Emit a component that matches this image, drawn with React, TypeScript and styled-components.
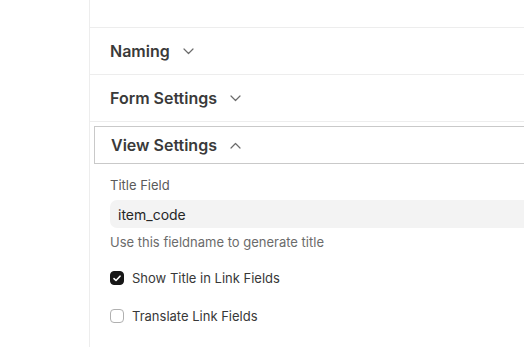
import React from "react";
import styled, { createGlobalStyle } from "styled-components";

const Global = createGlobalStyle`
  html, body { margin: 0; padding: 0; background: #fff; }
  body { font-family: Inter, "Noto Sans", sans-serif; color: #171717; -webkit-font-smoothing: antialiased; }
  * { box-sizing: border-box; }
`;

const Page = styled.div`
  display: flex;
  width: 524px;
  height: 347px;
  overflow: hidden;
`;

const Gutter = styled.div`
  width: 89px;
  flex: none;
`;

const Main = styled.div`
  flex: 1;
  border-left: 1px solid #ededed;
  display: flex;
  flex-direction: column;
  min-width: 0;
`;

const TopSpace = styled.div`
  height: 28px;
  border-bottom: 1px solid #ededed;
`;

const Section = styled.div<{ $open?: boolean }>`
  border-bottom: ${(p) => (p.$open ? "none" : "1px solid #ededed")};
  padding: ${(p) => (p.$open ? "4px 0 0 4px" : "0")};
`;

const Head = styled.div<{ $open?: boolean }>`
  display: flex;
  align-items: center;
  gap: 13px;
  height: ${(p) => (p.$open ? "38px" : "46px")};
  padding-left: ${(p) => (p.$open ? "16px" : "20px")};
  border: ${(p) => (p.$open ? "1px solid #c9c9c9" : "none")};
  border-right: none;
  margin-right: -2px;
`;

const Title = styled.span`
  font-size: 16px;
  font-weight: 600;
  color: #3a3a3a;
`;

const Body = styled.div`
  padding: 13px 0 0 16px;
  display: flex;
  flex-direction: column;
`;

const Label = styled.div`
  font-size: 13px;
  color: #5a5a5a;
  line-height: 16px;
`;

const Input = styled.div`
  margin-top: 7px;
  height: 28px;
  background: #f3f3f3;
  border-radius: 7px 0 0 7px;
  padding-left: 8px;
  display: flex;
  align-items: center;
  font-size: 14px;
  color: #262626;
`;

const Help = styled.div`
  margin-top: 6px;
  font-size: 13px;
  color: #6b6b6b;
  line-height: 16px;
`;

const CheckRow = styled.label<{ $first?: boolean }>`
  display: flex;
  align-items: center;
  gap: 8px;
  margin-top: ${(p) => (p.$first ? "19px" : "20px")};
  height: 18px;
  font-size: 13px;
  color: #383838;
`;

const Box = styled.span<{ $checked?: boolean }>`
  width: 14px;
  height: 14px;
  border-radius: 4px;
  display: inline-flex;
  align-items: center;
  justify-content: center;
  background: ${(p) => (p.$checked ? "#171717" : "#fff")};
  border: 1px solid ${(p) => (p.$checked ? "#171717" : "#b0b0b0")};
`;

const Chevron = ({ up }: { up?: boolean }) => (
  <svg width="11" height="7" viewBox="0 0 11 7" fill="none">
    <path
      d={up ? "M1 6L5.5 1.5L10 6" : "M1 1L5.5 5.5L10 1"}
      stroke="#6b6b6b"
      strokeWidth="1.2"
      strokeLinecap="round"
      strokeLinejoin="round"
    />
  </svg>
);

const Tick = () => (
  <svg width="8" height="7" viewBox="0 0 8 7" fill="none">
    <path d="M1 3.6L3 5.5L7 1.2" stroke="#fff" strokeWidth="1.6" strokeLinecap="round" strokeLinejoin="round" />
  </svg>
);

export default function App() {
  return (
    <Page>
      <Global />
      <Gutter />
      <Main>
        <TopSpace />
        <Section>
          <Head>
            <Title>Naming</Title>
            <Chevron />
          </Head>
        </Section>
        <Section>
          <Head>
            <Title>Form Settings</Title>
            <Chevron />
          </Head>
        </Section>
        <Section $open>
          <Head $open>
            <Title>View Settings</Title>
            <Chevron up />
          </Head>
          <Body>
            <Label>Title Field</Label>
            <Input>item_code</Input>
            <Help>Use this fieldname to generate title</Help>
            <CheckRow $first>
              <Box $checked>
                <Tick />
              </Box>
              Show Title in Link Fields
            </CheckRow>
            <CheckRow>
              <Box />
              Translate Link Fields
            </CheckRow>
          </Body>
        </Section>
      </Main>
    </Page>
  );
}
